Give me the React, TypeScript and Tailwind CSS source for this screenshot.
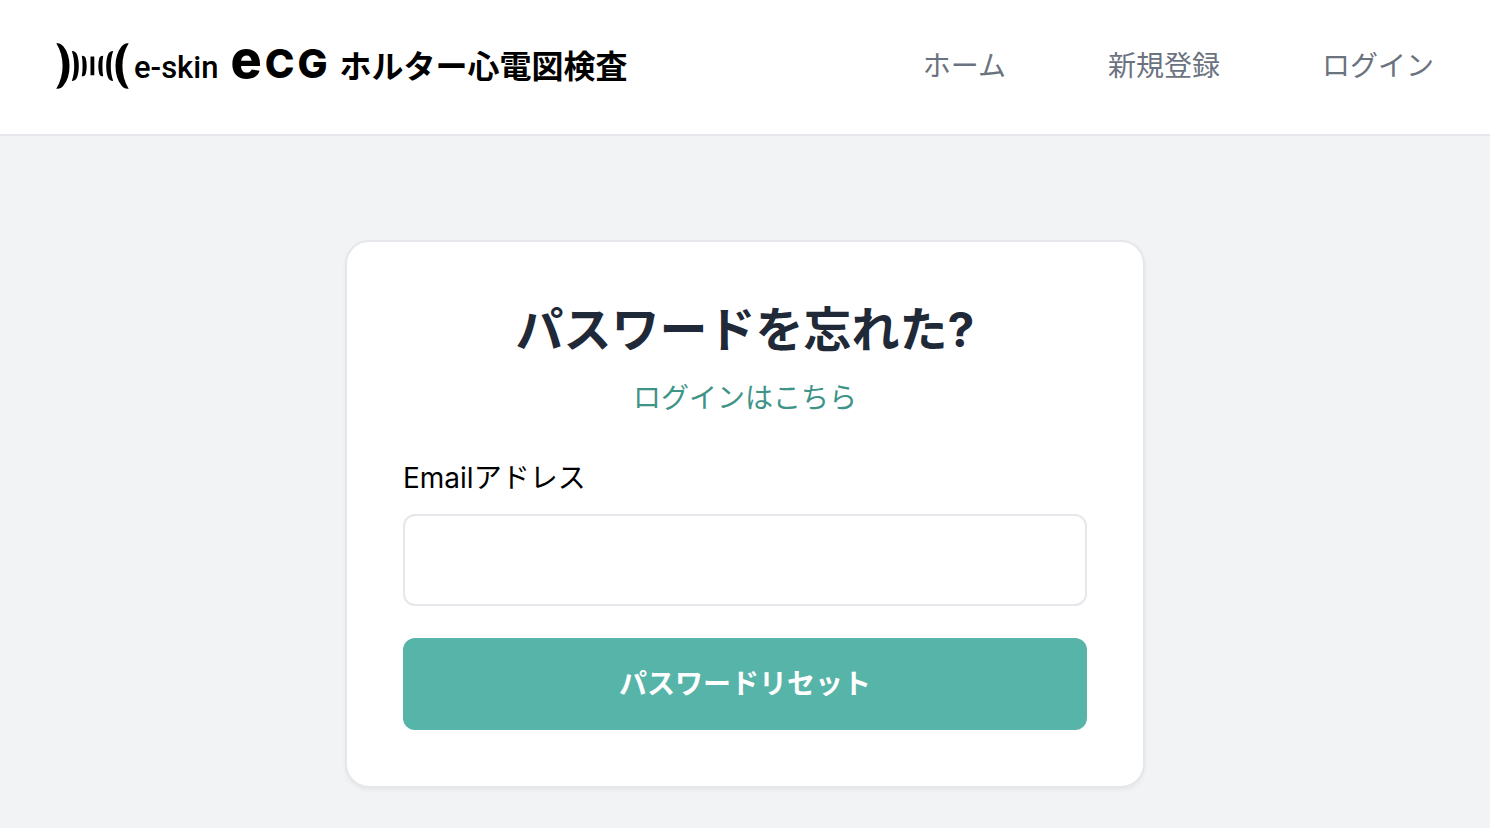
const NAV_ITEMS = [
  { label: "ホーム", href: "#home" },
  { label: "新規登録", href: "#register" },
  { label: "ログイン", href: "#login" },
];

function WaveMark() {
  return (
    <svg viewBox="0 0 74 46" className="h-[46px] w-[74px] shrink-0" fill="#000" aria-hidden="true">
      <path d="M0.300 0.300C3 -0.300 5.500 1 7.500 3.500C11.500 8.500 13.500 15 13.500 23S11.500 37.500 7.500 42.500C5.500 45 3 46.300 0.300 45.700C4.500 39 6.600 31 6.600 23S4.500 7 0.300 0.300Z" />
      <path d="M15.800 8C18.500 8 20 9.200 21 11.500C22.200 14.500 22.800 18.500 22.800 23S22.200 31.500 21 34.500C20 36.800 18.500 38 15.800 38C17.600 33 18.200 28 18.200 23S17.600 13 15.800 8Z" />
      <path d="M25.800 12.700C28.200 12.700 29.300 13.500 29.800 15.500C30.400 18 30.700 20.500 30.700 23S30.400 28 29.800 30.500C29.300 32.500 28.200 33.300 25.800 33.300C26.400 30 26.600 26.500 26.600 23S26.400 16 25.800 12.700Z" />
      <rect x="34.500" y="13.500" width="3.800" height="18.800" rx="0.500" />
      <path d="M47.200 12.700C44.800 12.700 43.700 13.500 43.200 15.500C42.600 18 42.300 20.500 42.300 23S42.600 28 43.200 30.500C43.700 32.500 44.800 33.300 47.200 33.300C46.600 30 46.400 26.500 46.400 23S46.600 16 47.200 12.700Z" />
      <path d="M57.200 8C54.500 8 53 9.200 52 11.500C50.800 14.500 50.200 18.500 50.200 23S50.800 31.500 52 34.500C53 36.800 54.500 38 57.200 38C55.400 33 54.800 28 54.800 23S55.400 13 57.200 8Z" />
      <path d="M72.700 0.300C70 -0.300 67.500 1 65.500 3.500C61.500 8.500 59.500 15 59.500 23S61.500 37.500 65.500 42.500C67.500 45 70 46.300 72.700 45.700C68.500 39 66.400 31 66.400 23S68.500 7 72.700 0.300Z" />
    </svg>
  );
}

function Brand() {
  return (
    <a href="#home" className="flex items-center whitespace-nowrap text-black">
      <WaveMark />
      <span className="ml-1 flex items-baseline gap-3 pb-1 leading-[48px]">
        <span className="font-[Roboto] text-[31px] font-medium">e-skin</span>
        <span className="flex items-baseline gap-[3px] font-[Inter] font-extrabold">
          <span className="text-[52px] leading-[48px]">e</span>
          <span className="text-[40px] leading-[48px]">C</span>
          <span className="text-[40px] leading-[48px]">G</span>
        </span>
        <span className="text-[32px] font-bold">ホルター心電図検査</span>
      </span>
    </a>
  );
}

export default function App() {
  return (
    <div className="min-h-screen bg-[#f2f3f5] font-['Inter','Noto_Sans_CJK_JP',sans-serif] text-[28px] leading-[40px]">
      <header className="flex h-[136px] items-center justify-between border-b-2 border-[#e5e7eb] bg-white px-14 pb-0.5">
        <Brand />
        <nav className="flex gap-[102px] whitespace-nowrap">
          {NAV_ITEMS.map((item) => (
            <a key={item.href} href={item.href} className="text-[#6b7280]">
              {item.label}
            </a>
          ))}
        </nav>
      </header>

      <main className="px-8 pt-[104px] pb-10">
        <section className="mx-auto max-w-[800px] rounded-3xl border-2 border-[#e5e7eb] bg-white p-14 shadow-[0_2px_4px_rgba(0,0,0,0.05)]">
          <div className="text-center">
            <h1 className="text-5xl leading-[64px] font-bold text-[#1f2937]">パスワードを忘れた?</h1>
            <p className="mt-4">
              <a href="#login" className="text-[#3f9488]">
                ログインはこちら
              </a>
            </p>
          </div>
          <form className="mt-10" onSubmit={(event) => event.preventDefault()}>
            <label htmlFor="email" className="block text-black">
              Emailアドレス
            </label>
            <input
              id="email"
              type="email"
              className="mt-4 block h-[92px] w-full rounded-xl border-2 border-[#e5e7eb] bg-white px-8 text-black"
            />
            <button type="submit" className="mt-8 block h-[92px] w-full rounded-xl bg-[#57b4a8] font-bold text-white">
              パスワードリセット
            </button>
          </form>
        </section>
      </main>
    </div>
  );
}
